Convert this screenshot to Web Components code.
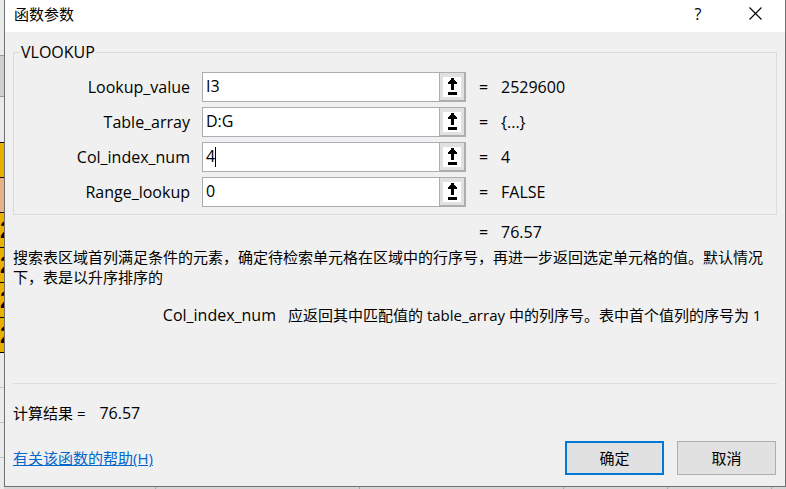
<!DOCTYPE html>
<html lang="zh-CN">
<head>
<meta charset="utf-8">
<title>函数参数</title>
<style>
body { margin: 0; background: #dcdcdc; color: #000; font: 16px/20px "Open Sans", "Noto Sans CJK SC", sans-serif; }
.desk { display: grid; grid-template-columns: 4px minmax(0, 1fr); grid-template-rows: 1fr 2px; min-height: 100vh; }
sheet-edge { grid-row: 1 / 3; }
sheet-ruler { grid-column: 2; }
</style>
</head>
<body>
<div class="desk">
  <sheet-edge></sheet-edge>
  <args-dialog heading="函数参数">
    <arg-group legend="VLOOKUP">
      <arg-row name="Lookup_value" value="I3" result="2529600"></arg-row>
      <arg-row name="Table_array" value="D:G" result="{...}"></arg-row>
      <arg-row name="Col_index_num" value="4" result="4" caret></arg-row>
      <arg-row name="Range_lookup" value="0" result="FALSE"></arg-row>
    </arg-group>
    <result-line>76.57</result-line>
    <function-help name="Col_index_num">
      <span slot="summary">搜索表区域首列满足条件的元素，确定待检索单元格在区域中的行序号，再进一步返回选定单元格的值。默认情况下，表是以升序排序的</span>
      应返回其中匹配值的 table_array 中的列序号。表中首个值列的序号为 1
    </function-help>
    <dialog-footer result="76.57"></dialog-footer>
  </args-dialog>
  <sheet-ruler></sheet-ruler>
</div>
<script>
class Base extends HTMLElement {
  constructor() {
    super();
    this.attachShadow({ mode: "open" });
  }
  connectedCallback() {
    this.shadowRoot.innerHTML = "<style>*{box-sizing:border-box}" + this.css() + "</style>" + this.html();
  }
  attr(n) { return this.getAttribute(n) || ""; }
}

customElements.define("sheet-edge", class extends Base {
  css() { return `
    :host { display: block; overflow: hidden; background: #e9eaec; }
    div { height: 35px; border-bottom: 1px solid #c4c4c4; overflow: hidden; }
    .top { height: 56px; border-color: #9a9a9a; }
    .head { height: 41px; background: #d0d0d0; border-color: #9a9a9a; }
    .blank { height: 46px; border-color: #000; }
    .gold { background: #eab000; border-color: #000; font: bold 24px/34px "Liberation Sans", sans-serif; }
    .peach { background: #e8b08a; border-color: #000; }`; }
  html() { return `<div class="top"></div><div class="head"></div><div class="blank"></div>
    <div class="gold"></div><div class="peach"></div>
    <div class="gold">2</div><div class="gold">2</div><div class="gold">2</div><div class="gold">2</div>
    <div></div><div></div><div></div>`; }
});

customElements.define("sheet-ruler", class extends Base {
  css() { return `
    :host { display: grid; grid-template-columns: 152px 204px 204px 104px 104px 1fr; background: #d6d6d6; }
    i { border-right: 1px solid #a8a8a8; }
    i:last-child { border: 0; }`; }
  html() { return "<i></i><i></i><i></i><i></i><i></i><i></i>"; }
});

customElements.define("args-dialog", class extends Base {
  css() { return `
    :host { display: flex; flex-direction: column; background: #f0f0f0; border: 1px solid #707070; border-top: 0; }
    header { display: flex; align-items: center; height: 32px; padding: 0 21px 5px 9px; background: #fff; }
    h1 { flex: 1; margin: 0; font: inherit; font-size: 15px; }
    button { display: grid; place-items: center; width: 18px; height: 24px; padding: 0; border: 0; background: none; font: inherit; color: inherit; }
    button + button { margin-left: 39px; }
    main { flex: 1; display: flex; flex-direction: column; padding: 10px 8px 11px; }
    slot { display: contents; }`; }
  html() { return `<header><h1>${this.attr("heading")}</h1>
    <button aria-label="帮助">?</button>
    <button aria-label="关闭"><svg width="13" height="13" viewBox="0 0 13 13"><path d="M.5.5l12 12M12.5.5l-12 12" stroke="#000" stroke-width="1.1" fill="none"/></svg></button>
    </header><main><slot></slot></main>`; }
});

customElements.define("arg-group", class extends Base {
  css() { return `
    :host { display: block; }
    fieldset { margin: 0; padding: 10px 0 7px; border: 1px solid #dcdcdc; min-width: 0; }
    legend { margin-left: 6px; padding: 0 1px; }
    .rows { display: flex; flex-direction: column; gap: 5px; }`; }
  html() { return `<fieldset><legend>${this.attr("legend")}</legend><div class="rows"><slot></slot></div></fieldset>`; }
});

customElements.define("arg-row", class extends Base {
  css() { return `
    :host { display: grid; grid-template-columns: 176px 265px 10px minmax(0, 1fr); column-gap: 12px; align-items: center; }
    label { text-align: right; }
    .field { position: relative; display: flex; height: 30px; margin-right: 1px; border: 1px solid #abadb3; background: #fff; }
    input { flex: 1; min-width: 0; padding: 0 3px 3px; border: 0; outline: 0; background: none; font: inherit; color: inherit; }
    .caret { position: absolute; left: 12px; top: 4px; width: 1px; height: 20px; background: #000; }
    button { width: 27px; margin: -1px; padding: 0 1px 0 0; border: 1px solid #adadad; border-width: 1px 2px 2px 1px; background: #e1e1e1; display: grid; place-items: center; }
    svg { display: block; background: #fff; }
    output { white-space: nowrap; }`; }
  html() { return `<label for="v">${this.attr("name")}</label>
    <div class="field"><input id="v" value="${this.attr("value")}">${this.hasAttribute("caret") ? '<span class="caret"></span>' : ""}
    <button aria-label="${this.attr("name")} 选取区域"><svg width="18" height="20" viewBox="0 0 18 20" shape-rendering="crispEdges"><path d="M8 1h3v2h1v1h1v1h1v2h-3v6h-3v-6h-3v-2h1v-1h1v-1h1zM5 15h9v3h-9z"/></svg></button></div>
    <span>=</span><output for="v">${this.attr("result")}</output>`; }
});

customElements.define("result-line", class extends Base {
  css() { return `
    :host { display: grid; grid-template-columns: 10px minmax(0, 1fr); column-gap: 12px; padding: 7px 0 5px 466px; }`; }
  html() { return "<span>=</span><output><slot></slot></output>"; }
});

customElements.define("function-help", class extends Base {
  css() { return `
    :host { display: block; flex: 1; font-size: 15px; }
    p { margin: 0; }
    .arg { display: grid; grid-template-columns: 263px minmax(0, 1fr); column-gap: 12px; margin-top: 18px; }
    .name { text-align: right; font-size: 16px; }`; }
  html() { return `<p><slot name="summary"></slot></p>
    <p class="arg"><span class="name">${this.attr("name")}</span><span><slot></slot></span></p>`; }
});

customElements.define("dialog-footer", class extends Base {
  css() { return `
    :host { display: block; border-top: 1px solid #dcdcdc; padding-top: 19px; font-size: 15px; }
    p { margin: 0 0 18px; }
    output { margin-left: 10px; font-size: 16px; }
    .bar { display: flex; align-items: center; gap: 13px; }
    a { color: #0066cc; margin-right: auto; }
    button { width: 99px; height: 34px; padding: 0; border: 1px solid #adadad; background: #e1e1e1; font: inherit; color: inherit; }
    .ok { border: 2px solid #0078d7; }
    .bar button:last-child { margin-right: 1px; }`; }
  html() { return `<p>计算结果 = <output>${this.attr("result")}</output></p>
    <div class="bar"><a href="#help">有关该函数的帮助(H)</a><button class="ok">确定</button><button>取消</button></div>`; }
});
</script>
</body>
</html>
